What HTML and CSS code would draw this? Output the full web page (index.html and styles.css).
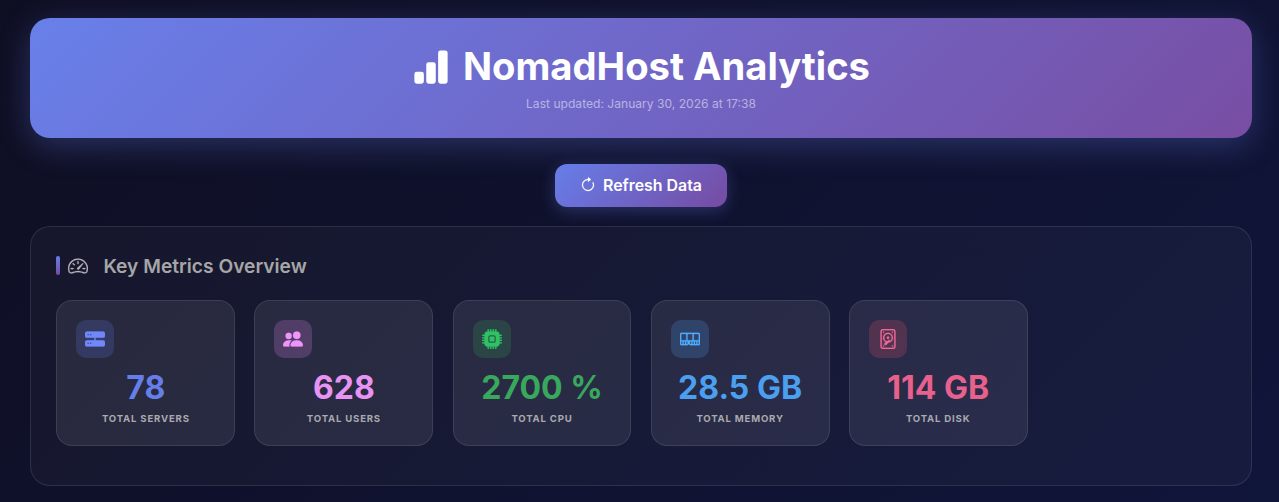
FILE: index.html
```html
<!DOCTYPE html>
<html lang="en">
<head>
<meta charset="utf-8">
<title>NomadHost Analytics</title>
<link rel="stylesheet" href="styles.css">
</head>
<body>
<div class="page">
  <header class="hero">
    <h1 class="hero-title">
      <svg class="hero-icon" viewBox="0 0 16 16" fill="currentColor"><path d="M1 11a1 1 0 0 1 1-1h2a1 1 0 0 1 1 1v3a1 1 0 0 1-1 1H2a1 1 0 0 1-1-1zm5-4a1 1 0 0 1 1-1h2a1 1 0 0 1 1 1v7a1 1 0 0 1-1 1H7a1 1 0 0 1-1-1zm5-5a1 1 0 0 1 1-1h2a1 1 0 0 1 1 1v12a1 1 0 0 1-1 1h-2a1 1 0 0 1-1-1z"/></svg>
      <span>NomadHost Analytics</span>
    </h1>
    <p class="hero-sub">Last updated: January 30, 2026 at 17:38</p>
  </header>
  <div class="actions">
    <button class="refresh" type="button">
      <svg class="refresh-icon" viewBox="0 0 16 16" fill="currentColor"><path fill-rule="evenodd" d="M8 3a5 5 0 1 0 4.546 2.914.5.5 0 0 1 .908-.417A6 6 0 1 1 8 2z"/><path d="M8 4.466V.534a.25.25 0 0 1 .41-.192l2.36 1.966c.12.1.12.284 0 .384L8.41 4.658A.25.25 0 0 1 8 4.466"/></svg>
      <span>Refresh Data</span>
    </button>
  </div>
  <section class="panel">
    <h2 class="panel-title">
      <svg class="panel-icon" viewBox="0 0 16 16" fill="currentColor"><path d="M8 4a.5.5 0 0 1 .5.5V6a.5.5 0 0 1-1 0V4.5A.5.5 0 0 1 8 4M3.732 5.732a.5.5 0 0 1 .707 0l.915.914a.5.5 0 1 1-.708.708l-.914-.915a.5.5 0 0 1 0-.707M2 10a.5.5 0 0 1 .5-.5h1.586a.5.5 0 0 1 0 1H2.5A.5.5 0 0 1 2 10m9.5 0a.5.5 0 0 1 .5-.5h1.5a.5.5 0 0 1 0 1H12a.5.5 0 0 1-.5-.5m.754-4.246a.39.39 0 0 0-.527-.02L7.547 9.31a.91.91 0 1 0 1.302 1.258l3.434-4.297a.39.39 0 0 0-.029-.518z"/><path fill-rule="evenodd" d="M0 10a8 8 0 1 1 15.547 2.661c-.442 1.253-1.845 1.602-2.932 1.25C11.309 13.488 9.475 13 8 13c-1.474 0-3.31.488-4.615.911-1.087.352-2.49.003-2.932-1.25A8 8 0 0 1 0 10m8-7a7 7 0 0 0-6.603 9.329c.203.575.923.876 1.68.63C4.397 12.533 6.358 12 8 12s3.604.532 4.923.96c.757.245 1.477-.056 1.68-.631A7 7 0 0 0 8 3"/></svg>
      <span>Key Metrics Overview</span>
    </h2>
    <div class="cards">
      <article class="card">
        <div class="card-badge badge-indigo">
          <svg class="card-icon" viewBox="0 0 16 16" fill="currentColor"><path d="M7.5 6h1v4h-1z"/><path fill-rule="evenodd" d="M1.5 2h13A1.500 1.500 0 0 1 16 3.500v2A1.500 1.500 0 0 1 14.500 7h-13A1.500 1.500 0 0 1 0 5.500v-2A1.500 1.500 0 0 1 1.500 2m.5 2v1h1V4zm2 0v1h1V4zM1.500 9h13A1.500 1.500 0 0 1 16 10.500v2a1.500 1.500 0 0 1-1.500 1.500h-13A1.500 1.500 0 0 1 0 12.500v-2A1.500 1.500 0 0 1 1.500 9m.5 2v1h1v-1zm2 0v1h1v-1z"/></svg>
        </div>
        <div class="card-value text-indigo">78</div>
        <div class="card-label">Total Servers</div>
      </article>
      <article class="card">
        <div class="card-badge badge-violet">
          <svg class="card-icon" viewBox="0 0 16 16" fill="currentColor"><path d="M7 14s-1 0-1-1 1-4 5-4 5 3 5 4-1 1-1 1zm4-6a3 3 0 1 0 0-6 3 3 0 0 0 0 6m-5.784 6A2.240 2.240 0 0 1 5 13c0-1.355.68-2.750 1.936-3.720A6.300 6.300 0 0 0 5 9c-4 0-5 3-5 4s1 1 1 1zM4.500 8a2.500 2.500 0 1 0 0-5 2.500 2.500 0 0 0 0 5"/></svg>
        </div>
        <div class="card-value text-violet">628</div>
        <div class="card-label">Total Users</div>
      </article>
      <article class="card">
        <div class="card-badge badge-green">
          <svg class="card-icon" viewBox="0 0 16 16" fill="currentColor"><path d="M6.500 6a.5.5 0 0 0-.5.5v3a.5.5 0 0 0 .5.5h3a.5.5 0 0 0 .5-.5v-3a.5.5 0 0 0-.5-.5z"/><path fill-rule="evenodd" d="M5.500.5a.5.5 0 0 0-1 0V2A2.500 2.500 0 0 0 2 4.500H.5a.5.5 0 0 0 0 1H2v1H.5a.5.5 0 0 0 0 1H2v1H.5a.5.5 0 0 0 0 1H2v1H.5a.5.5 0 0 0 0 1H2A2.500 2.500 0 0 0 4.500 14v1.500a.5.5 0 0 0 1 0V14h1v1.500a.5.5 0 0 0 1 0V14h1v1.500a.5.5 0 0 0 1 0V14h1v1.500a.5.5 0 0 0 1 0V14a2.500 2.500 0 0 0 2.500-2.500h1.500a.5.5 0 0 0 0-1H14v-1h1.500a.5.5 0 0 0 0-1H14v-1h1.500a.5.5 0 0 0 0-1H14v-1h1.500a.5.5 0 0 0 0-1H14A2.500 2.500 0 0 0 11.500 2V.5a.5.5 0 0 0-1 0V2h-1V.5a.5.5 0 0 0-1 0V2h-1V.5a.5.5 0 0 0-1 0V2h-1zm1 4.500h3A1.500 1.500 0 0 1 11 6.500v3A1.500 1.500 0 0 1 9.500 11h-3A1.500 1.500 0 0 1 5 9.500v-3A1.500 1.500 0 0 1 6.500 5"/></svg>
        </div>
        <div class="card-value text-green">2700 %</div>
        <div class="card-label">Total CPU</div>
      </article>
      <article class="card">
        <div class="card-badge badge-blue">
          <svg class="card-icon" viewBox="0 0 16 16" fill="currentColor"><path fill-rule="evenodd" d="M1 3a1 1 0 0 0-1 1v8a1 1 0 0 0 1 1h4.586a1 1 0 0 0 .707-.293l.353-.353a.5.5 0 0 1 .708 0l.353.353a1 1 0 0 0 .707.293H15a1 1 0 0 0 1-1V4a1 1 0 0 0-1-1zm.5 1h3a.5.5 0 0 1 .5.5v4a.5.5 0 0 1-.5.5h-3a.5.5 0 0 1-.5-.5v-4a.5.5 0 0 1 .5-.5m5 0h3a.5.5 0 0 1 .5.5v4a.5.5 0 0 1-.5.5h-3a.5.5 0 0 1-.5-.5v-4a.5.5 0 0 1 .5-.5m4.500.5a.5.5 0 0 1 .5-.5h3a.5.5 0 0 1 .5.5v4a.5.5 0 0 1-.5.5h-3a.5.5 0 0 1-.5-.5zM2 10v2H1v-2zm2 0v2H3v-2zm2 0v2H5v-2zm3 0v2H8v-2zm2 0v2h-1v-2zm2 0v2h-1v-2zm2 0v2h-1v-2z"/></svg>
        </div>
        <div class="card-value text-blue">28.5 GB</div>
        <div class="card-label">Total Memory</div>
      </article>
      <article class="card">
        <div class="card-badge badge-pink">
          <svg class="card-icon" viewBox="0 0 16 16" fill="currentColor"><path d="M12 2.500a.5.5 0 1 1-1 0 .5.5 0 0 1 1 0m0 11a.5.5 0 1 1-1 0 .5.5 0 0 1 1 0m-7.500.5a.5.5 0 1 0 0-1 .5.5 0 0 0 0 1M5 2.500a.5.5 0 1 1-1 0 .5.5 0 0 1 1 0M8 8a1 1 0 1 0 0-2 1 1 0 0 0 0 2"/><path fill-rule="evenodd" d="M12 7a4 4 0 0 1-3.937 4c-.537.813-1.020 1.515-1.181 1.677a1.102 1.102 0 0 1-1.560-1.559c.1-.098.396-.314.795-.588A4 4 0 0 1 8 3a4 4 0 0 1 4 4m-1 0a3 3 0 1 0-3.891 2.865c.667-.44 1.396-.91 1.955-1.268.224-.144.483.115.34.34l-.62.96A3 3 0 0 0 11 7"/><path fill-rule="evenodd" d="M2 2a2 2 0 0 1 2-2h8a2 2 0 0 1 2 2v12a2 2 0 0 1-2 2H4a2 2 0 0 1-2-2zm2-1a1 1 0 0 0-1 1v12a1 1 0 0 0 1 1h8a1 1 0 0 0 1-1V2a1 1 0 0 0-1-1z"/></svg>
        </div>
        <div class="card-value text-pink">114 GB</div>
        <div class="card-label">Total Disk</div>
      </article>
    </div>
  </section>
</div>
</body>
</html>
```
FILE: styles.css
```css
* { box-sizing: border-box; }
html, body { height: 100%; }
body {
  margin: 0;
  background: linear-gradient(135deg, #0f0f23 0%, #10153a 100%);
  color: #fff;
  font-family: Inter, "Liberation Sans", sans-serif;
  overflow: hidden;
}
.page { padding: 18px 27px 0 30px; }
.hero {
  height: 120px;
  border-radius: 20px;
  background: linear-gradient(rgba(255, 255, 255, 0.015), rgba(255, 255, 255, 0.015)), linear-gradient(135deg, #667eea 0%, #764ba2 100%);
  box-shadow: 0 8px 32px rgba(102, 126, 234, 0.3);
  text-align: center;
  padding-top: 25px;
}
.hero-title {
  margin: 0;
  display: flex;
  align-items: center;
  justify-content: center;
  gap: 13px;
  font-size: 38.2px;
  line-height: 47px;
  font-weight: 700;
}
.hero-icon { width: 38px; height: 38px; }
.hero-sub {
  margin: 6px 0 0;
  font-size: 12.1px;
  line-height: 15px;
  color: rgba(255, 255, 255, 0.5);
}
.actions { display: flex; justify-content: center; padding-top: 26px; }
.refresh {
  display: flex;
  align-items: center;
  gap: 7px;
  height: 43px;
  width: 172px;
  justify-content: center;
  border: 0;
  border-radius: 12px;
  padding: 0 0 1px;
  background: linear-gradient(135deg, #667eea 0%, #764ba2 100%);
  box-shadow: 0 4px 16px rgba(102, 126, 234, 0.3);
  color: #fff;
  font: 600 15.9px Inter, "Liberation Sans", sans-serif;
}
.refresh-icon { width: 16px; height: 16px; stroke: currentColor; stroke-width: 0.25; }
.panel {
  margin-top: 19px;
  height: 260px;
  padding: 25px 25.4px;
  border: 1px solid rgba(255, 255, 255, 0.1);
  border-radius: 20px;
  background: rgba(255, 255, 255, 0.03);
}
.panel-title {
  margin: 0;
  display: flex;
  align-items: center;
  gap: 15.4px;
  height: 27px;
  padding-left: 11.6px;
  position: relative;
  font-size: 19.2px;
  font-weight: 600;
  color: #a6a6a6;
}
.panel-title::before {
  content: "";
  position: absolute;
  left: 0;
  top: 4px;
  width: 4px;
  height: 19px;
  border-radius: 2px;
  background: linear-gradient(180deg, #667eea, #764ba2);
}
.panel-icon { width: 20px; height: 20px; color: #b4b4b8; stroke: currentColor; stroke-width: 0.15; }
.cards { display: flex; gap: 19.2px; margin-top: 21px; }
.card {
  width: 178.9px;
  height: 146px;
  padding: 19px;
  border: 1px solid rgba(255, 255, 255, 0.1);
  border-radius: 16px;
  background: rgba(255, 255, 255, 0.08);
  text-align: center;
}
.card-badge {
  width: 38px;
  height: 38px;
  border-radius: 10px;
  display: flex;
  align-items: center;
  justify-content: center;
}
.card-icon { width: 20px; height: 20px; stroke: currentColor; stroke-width: 0.2; }
.card-value {
  margin-top: 10px;
  font-size: 32px;
  line-height: 39px;
  font-weight: 700;
}
.card-label {
  margin-top: 6px;
  font-size: 9.6px;
  line-height: 12px;
  font-weight: 700;
  letter-spacing: 0.8px;
  text-transform: uppercase;
  color: #a9a9ae;
}
.badge-indigo { background: rgba(102, 126, 234, 0.2); color: #7088fb; }
.badge-violet { background: rgba(240, 147, 251, 0.2); color: #f093fb; }
.badge-green { background: rgba(56, 176, 90, 0.2); color: #2fc265; }
.badge-blue { background: rgba(79, 172, 254, 0.2); color: #4facfe; }
.badge-pink { background: rgba(245, 87, 108, 0.2); color: #ee6a9a; }
.text-indigo { color: #667eea; }
.text-violet { color: #e793f3; }
.text-green { color: #38a85c; }
.text-blue { color: #4a9ff0; }
.text-pink { color: #e8618c; }
```
